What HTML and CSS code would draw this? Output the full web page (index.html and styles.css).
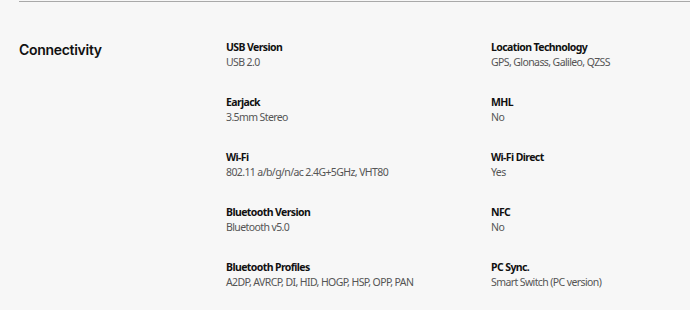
FILE: index.html
```html
<!DOCTYPE html>
<html lang="en">
<head>
  <meta charset="UTF-8" />
  <meta name="viewport" content="width=device-width, initial-scale=1.0"/>
  <title>Specs - Connectivity</title>
  <link rel="stylesheet" href="styles.css">
</head>
<body>

  <div class="divider"></div>

  <div class="spec-section">
    <h2 class="spec-title">Connectivity</h2>
    <div class="spec-grid">
      <div class="spec-item">
        <p class="spec-label">USB Version</p>
        <p class="spec-value">USB 2.0</p>
      </div>
      <div class="spec-item">
        <p class="spec-label">Location Technology</p>
        <p class="spec-value">GPS, Glonass, Galileo, QZSS</p>
      </div>
      <div class="spec-item">
        <p class="spec-label">Earjack</p>
        <p class="spec-value">3.5mm Stereo</p>
      </div>
      <div class="spec-item">
        <p class="spec-label">MHL</p>
        <p class="spec-value">No</p>
      </div>
      <div class="spec-item">
        <p class="spec-label">Wi-Fi</p>
        <p class="spec-value">802.11 a/b/g/n/ac 2.4G+5GHz, VHT80</p>
      </div>
      <div class="spec-item">
        <p class="spec-label">Wi-Fi Direct</p>
        <p class="spec-value">Yes</p>
      </div>
      <div class="spec-item">
        <p class="spec-label">Bluetooth Version</p>
        <p class="spec-value">Bluetooth v5.0</p>
      </div>
      <div class="spec-item">
        <p class="spec-label">NFC</p>
        <p class="spec-value">No</p>
      </div>
      <div class="spec-item">
        <p class="spec-label">Bluetooth Profiles</p>
        <p class="spec-value">A2DP, AVRCP, DI, HID, HOGP, HSP, OPP, PAN</p>
      </div>
      <div class="spec-item">
        <p class="spec-label">PC Sync.</p>
        <p class="spec-value">Smart Switch (PC version)</p>
      </div>
    </div>
  </div>

</body>
</html>
```

FILE: styles.css
```css
* {
  box-sizing: border-box;
  margin: 0;
  padding: 0;
}

body {
  background: #f7f7f7;
  min-height: 100vh;
  font-family: "Noto Sans", sans-serif;
}

.divider {
  margin: 1px 0 0 19px;
  height: 1px;
  background: #a9a9a9;
}

.spec-section {
  display: flex;
  margin-top: 38px;
  padding-left: 19px;
}

.spec-title {
  width: 207px;
  font-family: Inter, "Noto Sans", sans-serif;
  font-size: 14px;
  font-weight: 600;
  letter-spacing: -0.3px;
  line-height: 20px;
  color: #111;
}

.spec-grid {
  display: grid;
  grid-template-columns: 265px 1fr;
  grid-auto-rows: 55px;
}

.spec-label, .spec-value {
  font-size: 10.5px;
  letter-spacing: -0.6px;
  line-height: 15px;
}

.spec-label {
  font-weight: 700;
  color: #111;
}

.spec-value {
  color: #555;
}
```
